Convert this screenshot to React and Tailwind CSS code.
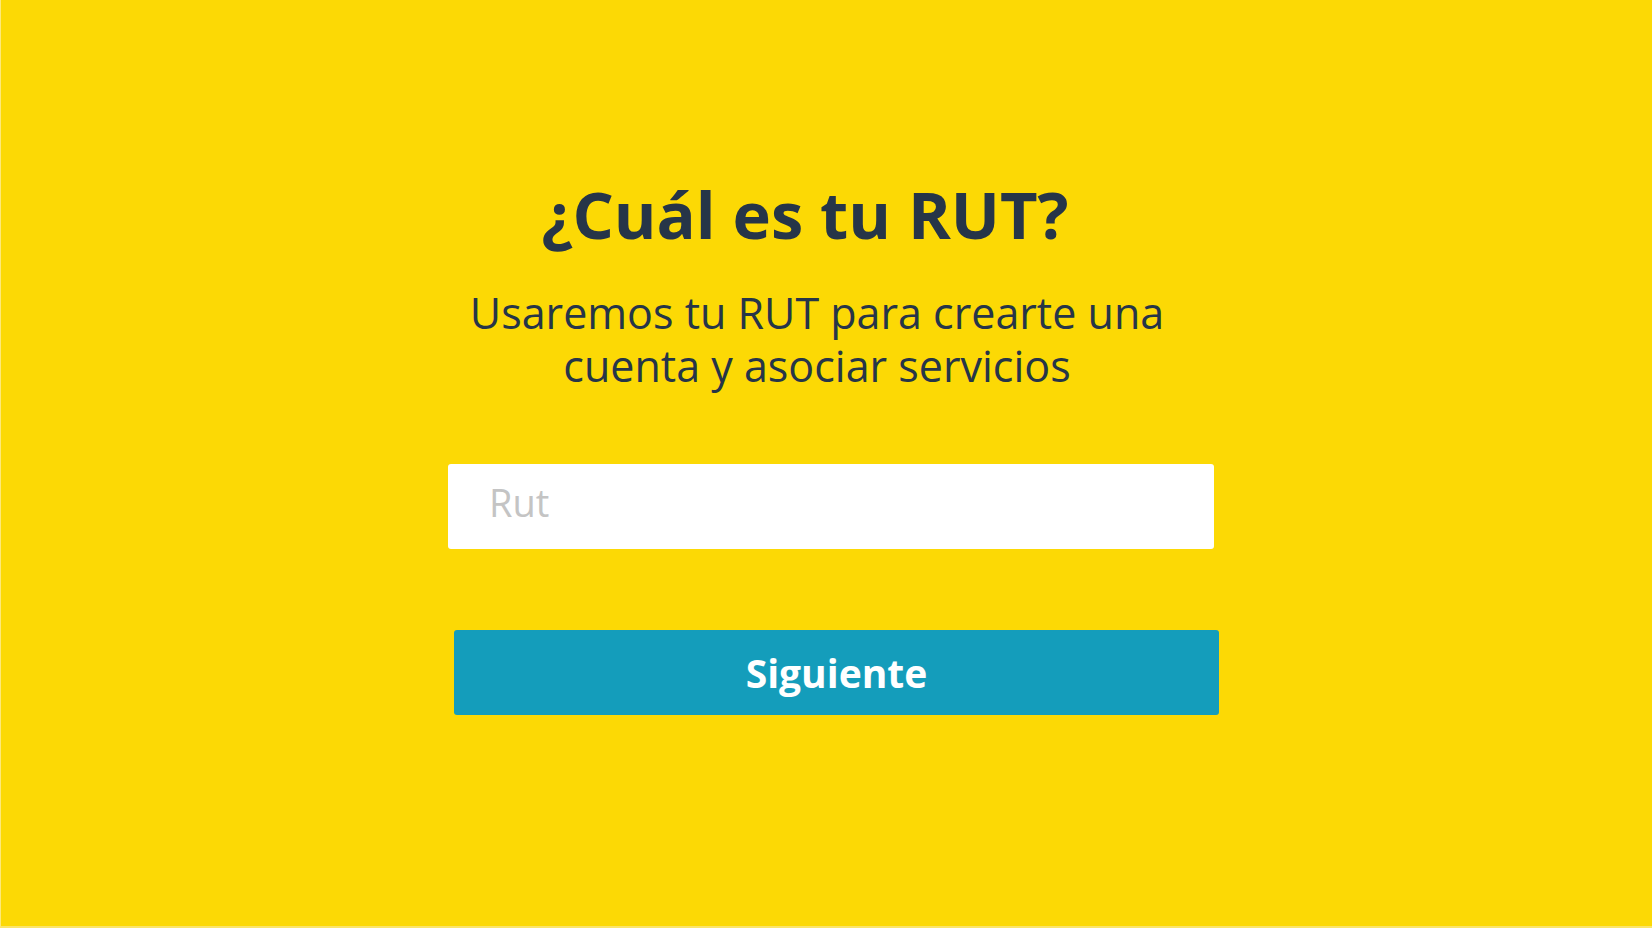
export default function App() {
  return (
    <div
      className="w-[1652px] h-[928px] bg-[#FCD905] border-l border-l-[#fde97a] border-b-2 border-b-[#fbe56a] overflow-hidden"
      style={{ fontFamily: '"Open Sans", "Noto Sans", sans-serif' }}
    >
      <div className="ml-[447px] w-[766px] pt-[174px] flex flex-col">
        <h1 className="pr-[52px] text-center text-[65px] leading-[80px] font-bold text-[#263548]">
          ¿Cuál es tu RUT?
        </h1>
        <p className="mt-[32px] pr-[28px] text-center text-[43px] leading-[53px] text-[#263548]">
          Usaremos tu RUT para crearte una
          <br />
          cuenta y asociar servicios
        </p>
        <div className="mt-[72px] h-[85px] w-[766px] bg-white rounded-[3px] flex items-center pl-[41px] pb-[10px]">
          <input
            type="text"
            placeholder="Rut"
            className="w-full bg-transparent outline-none text-[38px] leading-[50px] text-[#263548] placeholder:text-[#c4c4c4]"
            style={{ fontFamily: '"Open Sans", "Noto Sans", sans-serif' }}
          />
        </div>
        <button
          className="mt-[81px] ml-[6px] h-[85px] w-[765px] bg-[#149DBB] rounded-[3px] text-white text-[39px] font-bold flex items-center justify-center pt-[2px]"
          style={{ fontFamily: '"Open Sans", "Noto Sans", sans-serif' }}
        >
          Siguiente
        </button>
      </div>
    </div>
  );
}
